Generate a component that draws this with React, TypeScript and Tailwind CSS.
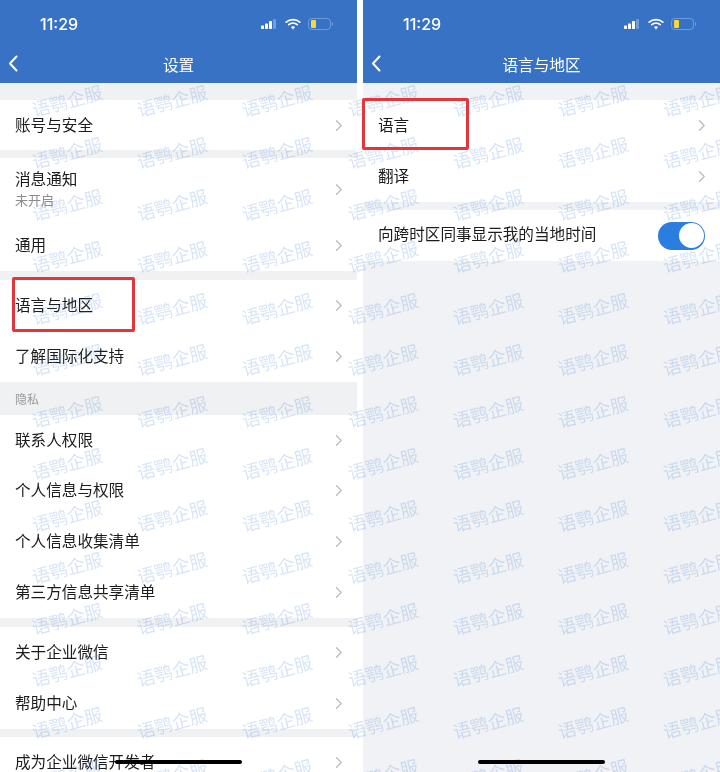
import React from 'react';

const cjk = "font-['Noto_Sans_CJK_SC','Noto_Sans',sans-serif]";

function StatusIcons() {
  return (
    <div className="flex items-center">
      {/* signal */}
      <svg width="17" height="12" viewBox="0 0 17 12" className="mr-[8px]">
        <rect x="1" y="7.5" width="3" height="3.5" rx="0.8" fill="#fff" />
        <rect x="5" y="5.5" width="3" height="5.5" rx="0.8" fill="#fff" />
        <rect x="9" y="3" width="3" height="8" rx="0.8" fill="#fff" />
        <rect x="13" y="1" width="3" height="10" rx="0.8" fill="#fff" fillOpacity="0.3" />
      </svg>
      {/* wifi */}
      <svg width="16" height="12" viewBox="0 0 16 12" className="mr-[7px]" fill="none" stroke="#fff" strokeLinecap="round">
        <path d="M1.2 4.2C5 .8 11 .8 14.8 4.2" strokeWidth="1.7" />
        <path d="M3.7 6.7c2.500-2.100 6.100-2.100 8.600 0" strokeWidth="1.7" />
        <path d="M8 11 6.200 9.100c1-.9 2.600-.9 3.600 0L8 11Z" fill="#fff" strokeWidth="0.5" />
      </svg>
      {/* battery */}
      <div className="flex items-center">
        <div className="flex h-[12px] w-[23px] items-center rounded-[4px] border border-[#6f9bdc] px-[1.500px]">
          <div className="h-[8px] w-[5px] rounded-[1px] bg-[#f4d93c]" />
        </div>
        <div className="ml-[1px] h-[4px] w-[1px] rounded-r bg-[#6f9bdc]" />
      </div>
    </div>
  );
}

function Header({ title }: { title: string }) {
  return (
    <div className="relative z-20 h-[83px] bg-[#3872c4] text-white">
      <div className="flex h-[47px] items-center justify-between pl-[40px] pr-[24px] pt-[1px]">
        <span className="font-['Inter',sans-serif] text-[16px] font-medium">11:29</span>
        <StatusIcons />
      </div>
      <div className="relative flex h-[35px] items-center justify-center">
        <svg width="10" height="17" viewBox="0 0 10 17" fill="none" className="absolute left-[8px] top-[8px]">
          <path d="M8.500 1.500 2 8.500l6.500 7" stroke="#fff" strokeWidth="2" strokeLinecap="round" strokeLinejoin="round" />
        </svg>
        <span className={`${cjk} text-[15.600px]`}>{title}</span>
      </div>
    </div>
  );
}

function Chevron() {
  return (
    <svg width="8" height="11" viewBox="0 0 8 11" fill="none" className="shrink-0">
      <path d="M1.500 .8 6.200 5.500l-4.700 4.700" stroke="#bcbcbe" strokeWidth="1.300" strokeLinecap="round" strokeLinejoin="round" />
    </svg>
  );
}

function Row({ label, sub, height = 'h-[51px]' }: { label: string; sub?: string; height?: string }) {
  return (
    <div className={`flex items-center justify-between bg-white pl-[15px] pr-[14px] ${height}`}>
      <div className={`${cjk} ${sub ? 'pb-[2px]' : 'pb-[3px]'}`}>
        <div className="text-[15.600px] leading-[22px] text-[#1c1c1c]">{label}</div>
        {sub && <div className="mt-[2px] text-[13px] leading-[18px] text-[#8c8c8c]">{sub}</div>}
      </div>
      <Chevron />
    </div>
  );
}

function Settings() {
  return (
    <div className="h-full w-[357px] shrink-0 bg-[#f0f1f3]">
      <Header title="设置" />
      <div className="pt-[17px]">
        <Row label="账号与安全" height="h-[50px]" />
        <div className="mt-[8px]">
          <Row label="消息通知" sub="未开启" height="h-[62px]" />
          <Row label="通用" />
        </div>
        <div className="mt-[9px]">
          <Row label="语言与地区" />
          <Row label="了解国际化支持" />
        </div>
        <div className={`${cjk} flex h-[33px] items-center pl-[15px] text-[12px] text-[#9a9a9a]`}>隐私</div>
        <Row label="联系人权限" height="h-[50px]" />
        <Row label="个人信息与权限" />
        <Row label="个人信息收集清单" />
        <Row label="第三方信息共享清单" />
        <div className="mt-[9px]">
          <Row label="关于企业微信" />
          <Row label="帮助中心" />
        </div>
        <div className="mt-[8px]">
          <Row label="成为企业微信开发者" />
        </div>
      </div>
    </div>
  );
}

function LanguageRegion() {
  return (
    <div className="h-full w-[357px] shrink-0 bg-[#f0f2f5]">
      <Header title="语言与地区" />
      <div className="pt-[17px]">
        <Row label="语言" />
        <Row label="翻译" />
        <div className="mt-[8px] flex h-[51px] items-center justify-between bg-white pl-[15px] pr-[15px]">
          <span className={`${cjk} pb-[3px] text-[15.600px] text-[#1c1c1c]`}>向跨时区同事显示我的当地时间</span>
          <div className="flex h-[28px] w-[47px] items-center justify-end rounded-full bg-[#2b7de0] pr-[1.500px]">
            <div className="h-[25px] w-[25px] rounded-full bg-white" />
          </div>
        </div>
      </div>
    </div>
  );
}

function Watermarks() {
  const cells = Array.from({ length: 7 * 14 }, (_, i) => i);
  return (
    <div className="pointer-events-none absolute inset-x-0 bottom-0 top-[83px] z-10 overflow-hidden">
      <div className="-mt-[8px] ml-[14px] grid grid-cols-[repeat(7,105.300px)] auto-rows-[51.800px]">
        {cells.map(i => (
          <div key={i} className="flex items-center justify-center">
            <span className={`${cjk} -rotate-[15deg] whitespace-nowrap text-[18px] text-[#3878d2]/20`}>语鹗企服</span>
          </div>
        ))}
      </div>
    </div>
  );
}

export default function App() {
  return (
    <div className="relative h-[772px] w-[720px] overflow-hidden bg-white blur-[0.3px]">
      <div className="flex h-full justify-between">
        <Settings />
        <LanguageRegion />
      </div>
      <Watermarks />

      {/* 红框标注 */}
      <div className="absolute left-[12px] top-[277px] z-20 h-[55px] w-[123px] rounded-[2px] border-[3px] border-[#e5343a]" />
      <div className="absolute left-[362px] top-[98px] z-20 h-[52px] w-[107px] rounded-[2px] border-[3px] border-[#e5343a]" />

      {/* home indicator */}
      <div className="absolute left-[115px] top-[760px] z-20 h-[4px] w-[127px] rounded-full bg-black" />
      <div className="absolute left-[478px] top-[760px] z-20 h-[4px] w-[127px] rounded-full bg-black" />
    </div>
  );
}
